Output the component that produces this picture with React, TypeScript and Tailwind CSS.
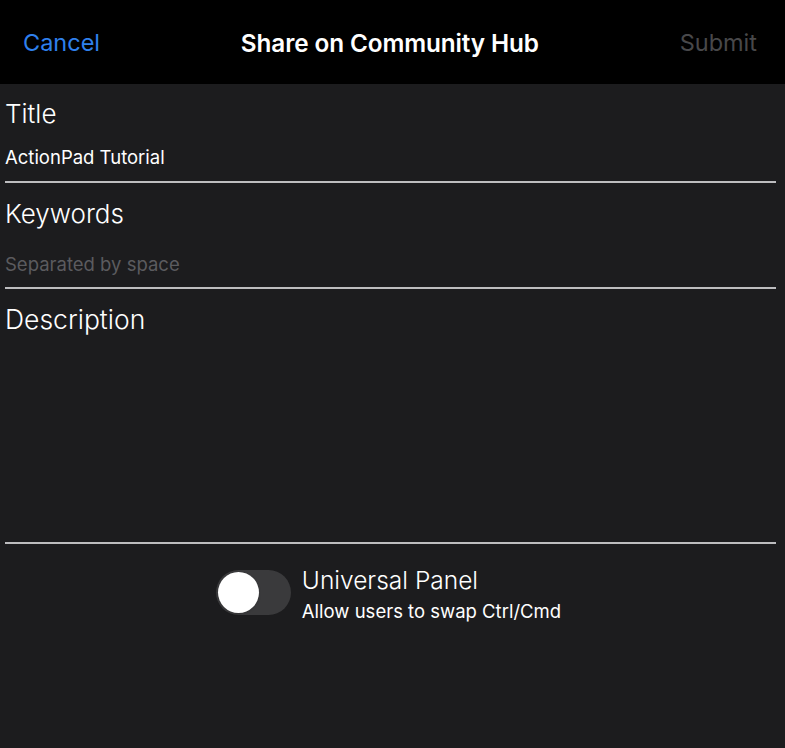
import React, { useState } from "react";

const font = { fontFamily: "Inter, 'Noto Sans', sans-serif" };

export default function App() {
  const [universal, setUniversal] = useState(false);

  return (
    <div className="h-[748px] w-[785px] overflow-hidden bg-[#1c1c1e]" style={font}>
      <div className="flex h-[84px] items-center justify-between bg-black pl-[23px] pr-[28px] pt-[2px]">
        <button className="text-[23.5px] text-[#2f80ed]">Cancel</button>
        <div className="text-[24.3px] font-semibold tracking-[-0.1px] text-white">Share on Community Hub</div>
        <button className="text-[23.5px] text-[#48484a]">Submit</button>
      </div>

      <div className="pl-[5px] pr-[9px]">
        {/* Title */}
        <div className="flex flex-col">
          <div className="pt-[13px] text-[26px] leading-[34px] font-light text-white">Title</div>
          <div className="mt-[13px] h-[26px] text-[18.5px] leading-[26px] text-white">ActionPad Tutorial</div>
          <div className="mt-[11px] h-[2px] bg-[#bdbdbf]" />
        </div>

        {/* Keywords */}
        <div className="flex flex-col">
          <div className="pt-[14px] text-[26px] leading-[34px] font-light text-white">Keywords</div>
          <div className="mt-[20px] h-[26px] text-[18.5px] leading-[26px] text-[#5b5b5f]">Separated by space</div>
          <div className="mt-[10px] h-[2px] bg-[#bdbdbf]" />
        </div>

        {/* Description */}
        <div className="flex flex-col">
          <div className="pt-[13px] text-[26.5px] leading-[34px] font-light text-white">Description</div>
          <div className="h-[206px]" />
          <div className="h-[2px] bg-[#bdbdbf]" />
        </div>

        <div className="mt-[21px] flex justify-center">
          <div className="flex items-start gap-[11px] pr-[4px]">
            <button
              onClick={() => setUniversal(!universal)}
              className={`mt-[5px] flex h-[45px] w-[75px] items-center rounded-full px-[2px] ${universal ? "bg-[#34c759] justify-end" : "bg-[#3a3a3c] justify-start"}`}
            >
              <span className="block h-[41px] w-[41px] rounded-full bg-white shadow" />
            </button>
            <div className="flex flex-col">
              <span className="text-[24.5px] leading-[30px] font-light text-white">Universal Panel</span>
              <span className="mt-[5px] text-[18.5px] leading-[22px] text-white">Allow users to swap Ctrl/Cmd</span>
            </div>
          </div>
        </div>
      </div>
    </div>
  );
}
